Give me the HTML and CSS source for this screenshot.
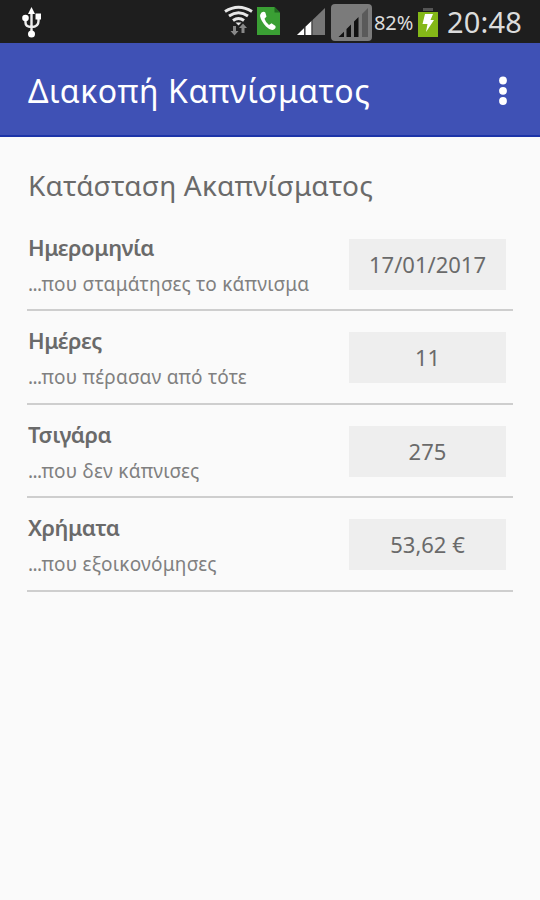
FILE: index.html
```html
<!DOCTYPE html>
<html lang="el">
<head>
  <meta charset="UTF-8">
  <title>Διακοπή Καπνίσματος</title>
  <link rel="stylesheet" href="styles.css">
</head>
<body>
<div class="statusbar">
  <svg class="usb" width="24" height="34" viewBox="0 0 24 34">
    <path d="M11.500 6v22M5.500 14v3.500q0 4.500 6 4.500M18.500 12v4q0 6-7 6" fill="none" stroke="#eee" stroke-width="2.400"/>
    <path d="M11.500 2l3.500 7H8z" fill="#fff"/>
    <circle cx="5.500" cy="13" r="3.300" fill="#fff"/>
    <path d="M15.500 8.500h5.500v6h-5.500z" fill="#fff"/>
    <circle cx="11.500" cy="29" r="3.500" fill="#fff"/>
  </svg>
  <svg class="signals" width="150" height="43" viewBox="0 0 150 43">
    <g fill="none" stroke="#e8e8e8" stroke-width="3">
      <path d="M1 11.500q13.500-8.500 27 0M5 16q9.500-6.500 19 0M9 20.500q5.500-4 11 0"/>
    </g>
    <path d="M11.500 22.500h6l-3 3z" fill="#e8e8e8"/>
    <path d="M9 26h3v5h2.500l-4 4.500-4-4.500H9zM17.500 33h3v-5H23l-4-4.500-4 4.500h2.500z" fill="#888"/>
    <path d="M33 7h17.500l5.500 5.500V35H33z" fill="#3a9f34"/>
    <path d="M50.500 7l5.500 5.500h-5.500z" fill="#216b20"/>
    <path d="M37.500 12.500q2.500-1.500 3.800 0l1.200 4-2 2.300q1.200 4 4.500 6.200l2.500-1.700 4 2.700q.8 2-1.500 3.500-3.500 1.500-8-3-5-5.500-6-10.500 0-2 1.500-3.500z" fill="#fff"/>
    <path d="M101 8v27H73z" fill="#777"/>
    <path d="M80 28.300V35h-7zM81.500 26.800l6-5.800v14h-6z" fill="#fff"/>
    <path d="M80.800 27v8M88 20v15" stroke="#333" stroke-width="1"/>
    <rect x="107" y="4" width="41" height="37" rx="4" fill="#7b7b7b"/>
    <path d="M120 31.700V37h-5.500zM127 24.500V37h-4.500v-8zM134.500 17v20H130V21.500z" fill="#111"/>
    <path d="M144 8v29h-6V14z" fill="#5a5a5a"/>
  </svg>
  <span class="percent">82%</span>
  <svg class="battery" width="22" height="30" viewBox="0 0 22 30">
    <rect x="6" y="0" width="10" height="3" fill="#555"/>
    <rect x="1" y="4" width="20" height="25" fill="#84b818"/>
    <path d="M8 6h8l-2.500 6H17L9 24l1.500-8H5.500z" fill="#fff"/>
  </svg>
  <span class="clock">20:48</span>
</div>

<div class="toolbar">
  <h1 class="title">Διακοπή Καπνίσματος</h1>
  <svg class="menu" width="10" height="30" viewBox="0 0 10 30" fill="#fff">
    <circle cx="5" cy="4.500" r="3.900"/>
    <circle cx="5" cy="14.800" r="3.900"/>
    <circle cx="5" cy="25" r="3.900"/>
  </svg>
</div>

<div class="content">
  <h2 class="heading">Κατάσταση Ακαπνίσματος</h2>
  <div class="row">
    <div class="info">
      <div class="label">Ημερομηνία</div>
      <div class="note"><span class="dots">...</span>που σταμάτησες το κάπνισμα</div>
    </div>
    <div class="value">17/01/2017</div>
  </div>
  <div class="row">
    <div class="info">
      <div class="label">Ημέρες</div>
      <div class="note"><span class="dots">...</span>που πέρασαν από τότε</div>
    </div>
    <div class="value">11</div>
  </div>
  <div class="row">
    <div class="info">
      <div class="label">Τσιγάρα</div>
      <div class="note"><span class="dots">...</span>που δεν κάπνισες</div>
    </div>
    <div class="value">275</div>
  </div>
  <div class="row">
    <div class="info">
      <div class="label">Χρήματα</div>
      <div class="note"><span class="dots">...</span>που εξοικονόμησες</div>
    </div>
    <div class="value">53,62 €</div>
  </div>
</div>
</body>
</html>
```
FILE: styles.css
```css
* { box-sizing: border-box; }
body { margin: 0; min-height: 900px; background: #fafafa; color: #6a6a6a; font-family: "Noto Sans", sans-serif; }
h1, h2 { margin: 0; font-weight: normal; white-space: nowrap; }
svg { display: block; flex: none; }

.statusbar { display: flex; align-items: center; height: 43px; padding: 0 18px 0 20px; background: #1e1e1e; color: #dcdcdc; }
.signals { margin-left: auto; }
.percent { width: 43px; font-size: 20px; line-height: 43px; padding-top: 2px; letter-spacing: -0.1px; }
.battery { margin: 2px 8px 0 0; }
.clock { width: 75px; font-size: 29px; line-height: 43px; letter-spacing: 0.2px; }

.toolbar { display: flex; align-items: center; justify-content: space-between; height: 94px; padding: 3px 32px 0 28px; background: #3f51b5; border-bottom: 2px solid #1c34a8; color: #fff; }
.title { font-size: 32px; line-height: 44px; padding-top: 1px; letter-spacing: 0.6px; }

.content { padding: 26px 27px 0; }
.heading { height: 55px; padding-left: 1px; font-size: 28px; line-height: 45px; letter-spacing: 0.2px; }
.row { display: flex; justify-content: space-between; height: 93.400px; padding: 19px 7px 0 0; border-bottom: 2px solid #cecece; }
.info { white-space: nowrap; padding-left: 1px; }
.label { font-size: 22px; line-height: 30px; font-weight: 600; letter-spacing: -0.45px; margin-top: -5px; }
.note { color: #808080; font-size: 19px; line-height: 26px; margin-top: 9px; letter-spacing: 0.25px; }
.dots { letter-spacing: -0.6px; }
.value { width: 157px; height: 51px; margin-top: 2px; background: #eee; font-size: 22px; line-height: 51px; text-align: center; }
```
